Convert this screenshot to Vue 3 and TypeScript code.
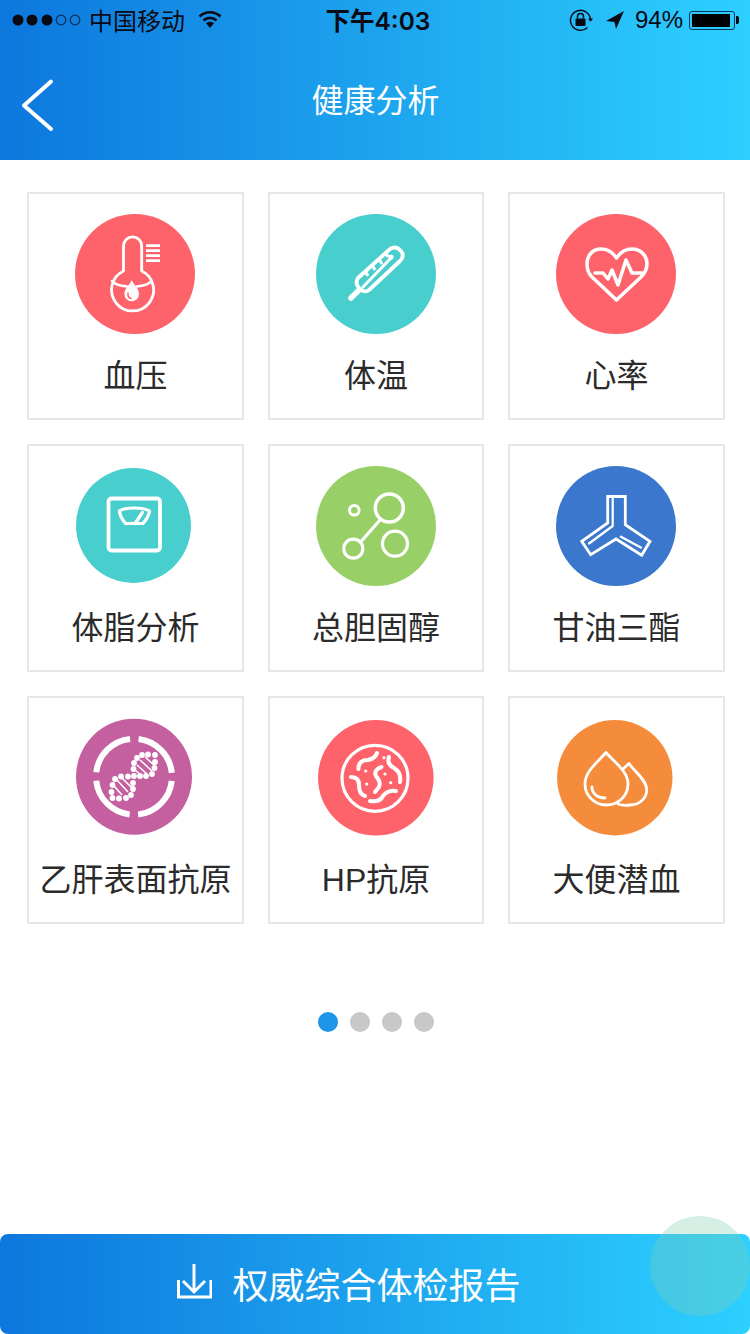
<script setup lang="ts">
interface Item {
  id: string
  label: string
  color: string
  cx: number
  cy: number
  r: number
}

const rows: Item[] = [
  { id: 'pressure', label: '血压', color: '#fe636c', cx: 60, cy: 60, r: 60 },
  { id: 'temp', label: '体温', color: '#48cfcd', cx: 60, cy: 60, r: 60 },
  { id: 'heart', label: '心率', color: '#fe636c', cx: 60, cy: 60, r: 60 },
  { id: 'scale', label: '体脂分析', color: '#48cfcd', cx: 58.5, cy: 59.5, r: 57.5 },
  { id: 'chol', label: '总胆固醇', color: '#98d067', cx: 60, cy: 60, r: 60 },
  { id: 'tg', label: '甘油三酯', color: '#3b78cd', cx: 60, cy: 60, r: 60 },
  { id: 'hbv', label: '乙肝表面抗原', color: '#c45fa0', cx: 59, cy: 58.7, r: 58 },
  { id: 'hp', label: 'HP抗原', color: '#fe636c', cx: 59.8, cy: 59.8, r: 57.8 },
  { id: 'blood', label: '大便潜血', color: '#f48c3c', cx: 58.8, cy: 59.8, r: 57.7 },
]

// 双螺旋上的小圆点
const helixDots: [number, number][] = [
  [67, 37], [73, 36.5], [80, 37], [62, 40], [59, 45], [58.5, 51], [59, 58],
  [80, 44], [79.5, 50], [77, 56], [71, 58], [65, 58], [53, 58.5], [46, 58.5],
  [40, 61], [37.5, 67], [36.5, 74], [37.5, 80], [44, 80.5], [51, 80], [56, 77],
  [58, 71], [58, 65],
]

const pageDots = [0, 1, 2, 3]
</script>

<template>
  <div class="page">
    <header class="top">
      <div class="status">
        <div class="status-left">
          <svg class="signal" width="70" height="14" viewBox="0 0 70 14">
            <circle cx="6" cy="7" r="5.5" fill="#0a0a14" />
            <circle cx="20" cy="7" r="5.5" fill="#0a0a14" />
            <circle cx="35" cy="7" r="5.5" fill="#0a0a14" />
            <circle cx="49" cy="7" r="4.8" fill="none" stroke="#0a2a50" stroke-width="1.2" />
            <circle cx="63" cy="7" r="4.8" fill="none" stroke="#0a2a50" stroke-width="1.2" />
          </svg>
          <span class="carrier">中国移动</span>
          <svg class="wifi" width="24" height="18" viewBox="0 0 24 18">
            <path d="M1.5 6.5C7.5 .8 16.5 .8 22.5 6.5" fill="none" stroke="#0a0a14" stroke-width="2.6" />
            <path d="M5.5 10.5C9.3 7 14.7 7 18.5 10.5" fill="none" stroke="#0a0a14" stroke-width="2.6" />
            <path d="M8 13.2C10.4 11.2 13.6 11.2 16 13.2L12 18Z" fill="#0a0a14" />
          </svg>
        </div>
        <div class="time">下午4:03</div>
        <div class="status-right">
          <svg width="24" height="24" viewBox="0 0 24 24">
            <path d="M21.5 12A10 10 0 1 0 18.5 19.5" fill="none" stroke="#0a0a14" stroke-width="1.4" />
            <path d="M19 10.5h5l-2.5 3.2Z" fill="#0a0a14" />
            <rect x="6.5" y="10.5" width="10" height="7.5" rx="1" fill="#0a0a14" />
            <path d="M8.5 10.5V8.5a3 3 0 0 1 6 0v2" fill="none" stroke="#0a0a14" stroke-width="1.5" />
          </svg>
          <svg class="locate" width="20" height="20" viewBox="0 0 20 20">
            <path d="M1 11L19 1L11 19L9.5 12Z" fill="#0a0a14" />
          </svg>
          <span class="percent">94%</span>
          <div class="battery"><div class="battery-fill"></div></div>
        </div>
      </div>
      <div class="nav">
        <svg class="back" width="36" height="56" viewBox="0 0 36 56">
          <path d="M31 3.500L4 27.500L31 51" fill="none" stroke="#fff" stroke-width="4" stroke-linecap="round" stroke-linejoin="round" />
        </svg>
        <h1 class="title">健康分析</h1>
      </div>
    </header>

    <main class="grid">
      <div v-for="item in rows" :key="item.id" class="card">
        <svg class="icon" width="120" height="120" viewBox="0 0 120 120">
          <circle :cx="item.cx" :cy="item.cy" :r="item.r" :fill="item.color" />
          <g fill="none" stroke="#fff" stroke-linecap="round" stroke-linejoin="round">
            <template v-if="item.id === 'pressure'">
              <path stroke-width="2.800" d="M48.500 57V32A9.100 9.100 0 0 1 66.700 32V57A21 21 0 1 1 48.500 57Z" />
              <path stroke-width="2.800" stroke-linecap="butt" d="M71 31.700H85M71 36.700H85M71 41.700H85M71 46.700H85" />
              <path stroke-width="2.500" d="M37 67C40 71 46 72 52 72.500M76.500 67C73.500 71 67.500 72 61.500 72.500" />
              <path fill="#fff" stroke="none" d="M56.700 66C58.500 71 64 74 64 80A7.300 7.300 0 0 1 49.400 80C49.400 74 55 71 56.700 66Z" />
              <path stroke="#fe636c" stroke-width="1.500" d="M53 79C52.500 82 54 84 56 84.500" />
            </template>
            <template v-else-if="item.id === 'temp'">
              <path stroke-width="3.800" d="M42 64L74 35Q80 31 85 37Q89 42 84 47L53 76Q51 78 47 77Q43 75 41 71Q40 67 42 64Z" />
              <path stroke-width="5.500" d="M43 76L35 84" />
              <path stroke-width="3" d="M47 73L75 44" />
              <circle cx="75" cy="43" r="2.500" fill="#fff" stroke="none" />
              <path stroke-width="3" stroke-linecap="butt" d="M49 57L52 62M56 51L59 56M63 45L66 50M70 39L72 43" />
            </template>
            <template v-else-if="item.id === 'heart'">
              <path stroke-width="3.500" d="M60.500 44C56 37 50 35 45 35C36 35 31 42 31 50C31 56 33 60 36 63L60.500 86L85 63C88 60 91 56 91 50C91 42 85 35 76 35C71 35 65 37 60.500 44Z" />
              <path stroke-width="3.500" d="M39 59H47L52 65L56 56L62 71L70 46L76 59H86" />
            </template>
            <template v-else-if="item.id === 'scale'">
              <rect x="33.500" y="32.500" width="51.500" height="52" rx="3" stroke-width="3.800" />
              <path stroke-width="3.200" d="M44.500 45C50 41 68 41 74.500 45C74 50 71 54 68 57.500H50.500C47.500 54 45 50 44.500 45Z" />
              <path stroke-width="3.200" d="M60 57.500L67.500 46.500" />
            </template>
            <template v-else-if="item.id === 'chol'">
              <circle cx="73.300" cy="42" r="14" stroke-width="3.500" />
              <circle cx="38.300" cy="44.300" r="4.800" stroke-width="3" />
              <circle cx="37.300" cy="82.700" r="9.500" stroke-width="3.200" />
              <circle cx="79" cy="77.700" r="12.500" stroke-width="3.200" />
              <path stroke-width="3.200" d="M64 54L45.500 75" />
            </template>
            <template v-else-if="item.id === 'tg'">
              <path stroke-width="2.800" stroke-linejoin="miter" d="M51.700 30.500H69.300V58.700L94 75.300L85.700 89.300L60 73L34.700 88.700L25.700 75.300L51.700 57Z" />
              <path stroke-width="2.200" stroke-linecap="butt" d="M56.700 32V60L32.300 78M64 70.300L85.700 82" />
            </template>
            <template v-else-if="item.id === 'hbv'">
              <circle cx="59" cy="58.700" r="38" stroke-width="6" stroke-linecap="butt" stroke-dasharray="51.100 8.600" stroke-dashoffset="-4.300" />
              <circle v-for="(d, i) in helixDots" :key="i" :cx="d[0]" :cy="d[1]" r="2.900" fill="#fff" stroke="none" />
              <path stroke-width="1.600" stroke-linecap="butt" d="M65 42L77 53M62 47L72 56M60 52L66 57M70 39L79 47M42 62L53 74M39 68L47 77M47 60L57 70" />
            </template>
            <template v-else-if="item.id === 'hp'">
              <circle cx="59" cy="60.300" r="33" stroke-width="3.200" />
              <g stroke-width="4">
                <path d="M42.500 51C42 44 47 42 52 42C57 41 60 38 61 35" />
                <path d="M35 59C41 59 43 62 43 67C43 73 45 77 49 78" />
                <path d="M65.500 49C60 51 58 54 60 58C63 62 65 65 63 69L59 74" />
                <path d="M73 39C71 45 74 48 78 50C83 53 85 58 84 64" />
                <path d="M54 83C60 84 65 82 67 78C70 74 75 72 80 73" />
              </g>
              <g fill="#fff" stroke="none">
                <circle cx="68" cy="39.700" r="1.600" />
                <circle cx="49.700" cy="53" r="1.600" />
                <circle cx="69" cy="56" r="1.600" />
                <circle cx="50.700" cy="66" r="1.600" />
                <circle cx="74.700" cy="64.700" r="1.600" />
              </g>
            </template>
            <template v-else>
              <path stroke-width="2.800" d="M50 34.500C42 44 29 53 29 66C29 78 39 87 50.500 87C62 87 72 78 72 66C72 53 58 44 50 34.500Z" />
              <path stroke-width="2.800" d="M67 51L73 45.500C78 53 90.700 62 90.700 71.500C90.700 81 83 87 74 87C70 87.500 66 87.500 62 86" />
              <path stroke-width="2.800" d="M36 69C36 76 42 80 49 80" />
            </template>
          </g>
        </svg>
        <div class="label">{{ item.label }}</div>
      </div>
    </main>

    <div class="pager">
      <span v-for="d in pageDots" :key="d" class="dot" :class="{ active: d === 0 }"></span>
    </div>

    <footer class="report">
      <svg class="download" width="36" height="36" viewBox="0 0 36 36">
        <path d="M18 1V28M7 18L18 29L29 18" fill="none" stroke="#fff" stroke-width="3" />
        <path d="M2.500 17V34H35V17" fill="none" stroke="#fff" stroke-width="3" />
      </svg>
      <span class="report-text">权威综合体检报告</span>
      <div class="touch"></div>
    </footer>
  </div>
</template>

<style scoped>
* {
  box-sizing: border-box;
}

.page {
  position: relative;
  display: flex;
  flex-direction: column;
  width: 750px;
  height: 1334px;
  overflow: hidden;
  background: #fff;
  font-family: "Liberation Sans", "Noto Sans CJK SC", sans-serif;
}

.top {
  height: 160px;
  background: linear-gradient(90deg, #0d77dd 0%, #2dd0ff 100%);
}

.status {
  display: grid;
  grid-template-columns: 1fr auto 1fr;
  align-items: center;
  height: 40px;
  padding: 0 11px 2px 12px;
  color: #0a0a14;
}

.status-left,
.status-right {
  display: flex;
  align-items: center;
}

.status-right {
  justify-content: flex-end;
  padding-top: 2px;
}

.signal {
  margin-top: 2px;
}

.carrier {
  margin-left: 7px;
  font-size: 24px;
}

.wifi {
  margin-left: 13px;
}

.time {
  margin-left: 5px;
  font-family: Inter, "Noto Sans CJK SC", sans-serif;
  font-size: 24.500px;
  font-weight: 600;
}

.status-right > svg:first-child {
  margin-right: 1px;
}

.locate {
  margin-left: 11px;
}

.percent {
  margin-left: 10px;
  font-size: 24px;
}

.battery {
  position: relative;
  width: 46px;
  height: 19px;
  margin: 0 4px 0 6px;
  padding: 2px;
  border: 1.5px solid #0a3560;
  border-radius: 3px;
}

.battery::after {
  content: "";
  position: absolute;
  top: 4px;
  right: -5px;
  width: 3px;
  height: 8px;
  border-radius: 0 2px 2px 0;
  background: #0a0a14;
}

.battery-fill {
  width: 94%;
  height: 100%;
  background: #000;
}

.nav {
  position: relative;
  display: flex;
  align-items: center;
  justify-content: center;
  height: 120px;
  padding: 2px 0 0 1px;
}

.back {
  position: absolute;
  left: 20px;
  top: 38px;
}

.title {
  margin: 0;
  color: #fff;
  font-size: 32px;
  font-weight: 400;
  line-height: 40px;
}

.grid {
  display: grid;
  grid-template-columns: 217px 216px 217px;
  grid-auto-rows: 228px;
  gap: 24px;
  padding: 32px 0 0 27px;
}

.card {
  padding-top: 20px;
  border: 2px solid #e6e6e6;
  text-align: center;
}

.icon {
  display: block;
  margin-left: 46px;
}

.label {
  margin-top: 20px;
  color: #2b2b2b;
  font-size: 32px;
  line-height: 44px;
  white-space: nowrap;
}

.pager {
  display: flex;
  justify-content: center;
  gap: 12px;
  margin-top: 88px;
  padding-left: 2px;
}

.dot {
  width: 20px;
  height: 20px;
  border-radius: 50%;
  background: #c8c8c8;
}

.dot.active {
  background: #1e96e8;
}

.report {
  display: flex;
  align-items: center;
  gap: 20px;
  height: 100px;
  margin-top: auto;
  padding: 6px 53px 0 0;
  justify-content: center;
  border-radius: 8px;
  background: linear-gradient(90deg, #0d77dd 0%, #2dd0ff 100%);
}

.download {
  margin-top: -12px;
}

.report-text {
  color: #fff;
  font-size: 36px;
  line-height: 48px;
}

.touch {
  position: absolute;
  right: 0;
  bottom: 18px;
  width: 100px;
  height: 100px;
  border-radius: 50%;
  background: rgba(127, 206, 176, 0.33);
}
</style>
